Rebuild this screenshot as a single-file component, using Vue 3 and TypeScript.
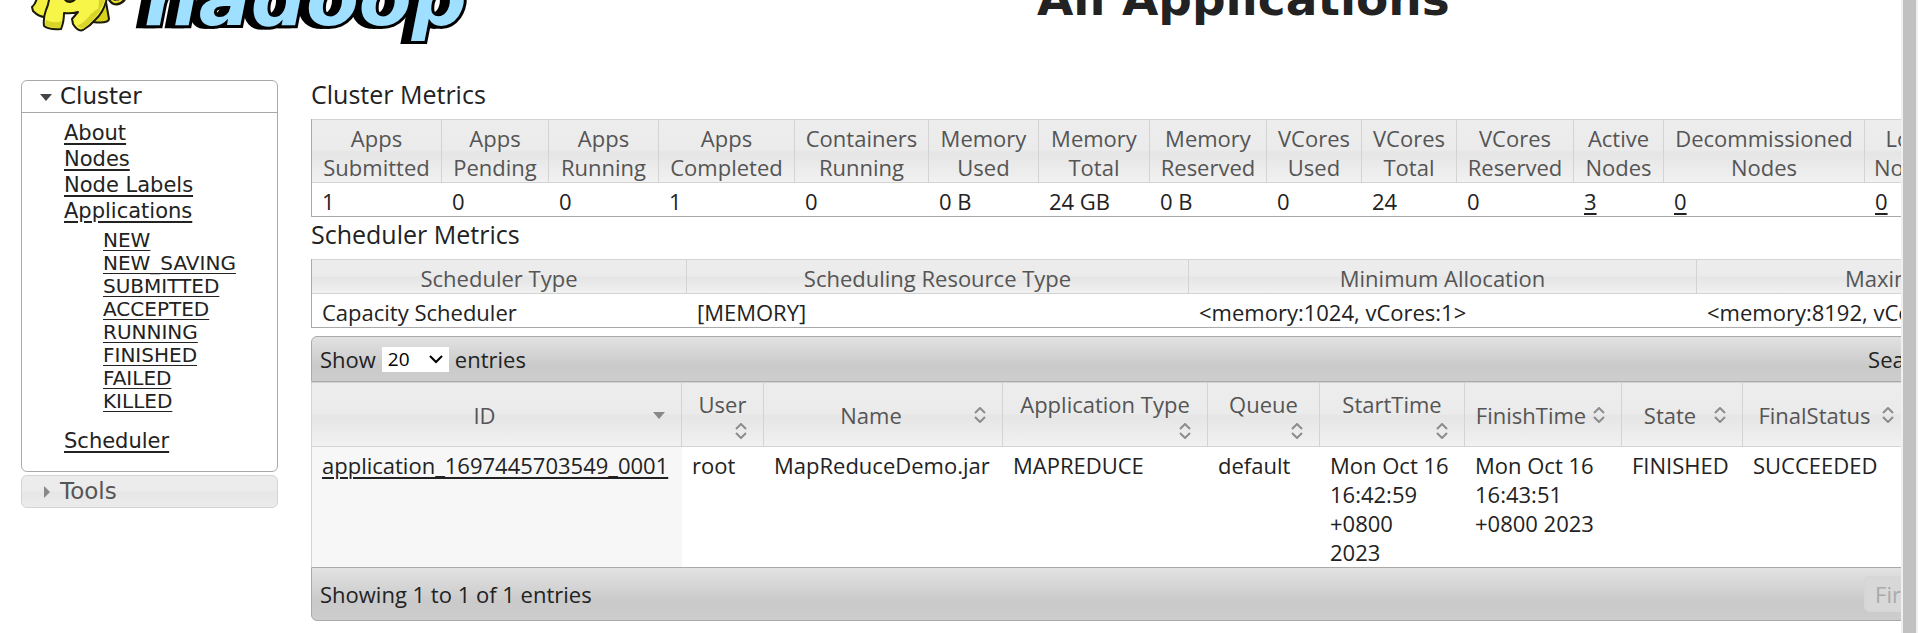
<script setup lang="ts">
import { ref } from 'vue'

interface Metric {
  lines: string[]
  value: string
  width: number
  link?: boolean
}

interface Column {
  label: string
  width: number
  sort: 'desc' | 'both'
  stacked?: boolean
}

const appStates = ['NEW', 'NEW_SAVING', 'SUBMITTED', 'ACCEPTED', 'RUNNING', 'FINISHED', 'FAILED', 'KILLED']

const metrics: Metric[] = [
  { lines: ['Apps', 'Submitted'], value: '1', width: 130 },
  { lines: ['Apps', 'Pending'], value: '0', width: 107 },
  { lines: ['Apps', 'Running'], value: '0', width: 110 },
  { lines: ['Apps', 'Completed'], value: '1', width: 136 },
  { lines: ['Containers', 'Running'], value: '0', width: 134 },
  { lines: ['Memory', 'Used'], value: '0 B', width: 110 },
  { lines: ['Memory', 'Total'], value: '24 GB', width: 111 },
  { lines: ['Memory', 'Reserved'], value: '0 B', width: 117 },
  { lines: ['VCores', 'Used'], value: '0', width: 95 },
  { lines: ['VCores', 'Total'], value: '24', width: 95 },
  { lines: ['VCores', 'Reserved'], value: '0', width: 117 },
  { lines: ['Active', 'Nodes'], value: '3', width: 90, link: true },
  { lines: ['Decommissioned', 'Nodes'], value: '0', width: 201, link: true },
  { lines: ['Lost', 'Nodes'], value: '0', width: 85, link: true },
  { lines: ['Unhealthy', 'Nodes'], value: '0', width: 127, link: true },
  { lines: ['Rebooted', 'Nodes'], value: '0', width: 127, link: true },
]

const scheduler = [
  { label: 'Scheduler Type', value: 'Capacity Scheduler', width: 375 },
  { label: 'Scheduling Resource Type', value: '[MEMORY]', width: 502 },
  { label: 'Minimum Allocation', value: '<memory:1024, vCores:1>', width: 508 },
  { label: 'Maximum Allocation', value: '<memory:8192, vCores:8>', width: 507 },
]

const columns: Column[] = [
  { label: 'ID', width: 370, sort: 'desc' },
  { label: 'User', width: 82, sort: 'both', stacked: true },
  { label: 'Name', width: 239, sort: 'both' },
  { label: 'Application Type', width: 205, sort: 'both', stacked: true },
  { label: 'Queue', width: 112, sort: 'both', stacked: true },
  { label: 'StartTime', width: 145, sort: 'both', stacked: true },
  { label: 'FinishTime', width: 157, sort: 'both' },
  { label: 'State', width: 121, sort: 'both' },
  { label: 'FinalStatus', width: 168, sort: 'both' },
  { label: 'Progress', width: 293, sort: 'both' },
]

const application = {
  id: 'application_1697445703549_0001',
  cells: [
    ['root'],
    ['MapReduceDemo.jar'],
    ['MAPREDUCE'],
    ['default'],
    ['Mon Oct 16', '16:42:59', '+0800', '2023'],
    ['Mon Oct 16', '16:43:51', '+0800 2023'],
    ['FINISHED'],
    ['SUCCEEDED'],
    [''],
  ],
}

const pageSize = ref('20')
const query = ref('')
</script>

<template>
  <div class="window">
    <div class="page">
      <header class="banner">
        <svg class="logo" viewBox="21 -70 460 116" role="img" aria-label="hadoop">
          <g stroke="#1c1b08" stroke-width="2" stroke-linejoin="round">
            <path fill="#d8d31c" d="M97 -10 L106 2 L109 19 Q108 24 93 22 L92 8 Z" />
            <path fill="none" stroke-width="5" d="M109 -4 Q111 3 117 3 Q123 2 125 -4" />
            <path fill="none" stroke="#e2dc2a" stroke-width="2" d="M110 -4 Q112 3 117 2 Q122 1 124 -4" />
            <path fill="#f3f040" d="M38 -12 Q38 2 32 7 L33 11 Q39 17 45 17 L49 9 L54 -12 Z" />
            <path fill="#f7f548" d="M50 -14 Q50 2 46 10 Q43 18 44 26 Q49 30 61 29 Q64 22 64 13 Q71 14 78 12 L72 19 L73 24 Q78 32 83 30 Q90 26 95 20 Q104 12 107 -2 L100 -14 Z" />
            <path fill="#4b4805" d="M64 -5 Q64 2 70 2 Q76 1 77 -5 Z" />
          </g>
          <path fill="#d9d42a" d="M46 20 Q54 24 62 21 L60 28 Q50 28 45 25 Z M77 26 Q84 23 91 14 L97 9 L101 10 Q93 21 83 29 Z M99 0 L105 0 Q103 6 98 12 Z" />
          <text class="wordmark" x="144" y="25">hadoop</text>
        </svg>
        <h1 class="title">All Applications</h1>
      </header>

      <div class="body">
        <nav class="sidebar">
          <section class="panel">
            <button type="button" class="panel-head">
              <svg width="12" height="12" viewBox="0 0 12 12"><path d="M0 3 H12 L6 10 Z" fill="#454545" /></svg>
              Cluster
            </button>
            <ul class="links">
              <li><a href="#about">About</a></li>
              <li><a href="#nodes">Nodes</a></li>
              <li><a href="#nodelabels">Node Labels</a></li>
              <li>
                <a href="#apps">Applications</a>
                <ul class="states">
                  <li v-for="state in appStates" :key="state">
                    <a :href="'#apps/' + state">{{ state }}</a>
                  </li>
                </ul>
              </li>
              <li><a href="#scheduler">Scheduler</a></li>
            </ul>
          </section>
          <button type="button" class="tools">
            <svg width="12" height="12" viewBox="0 0 12 12"><path d="M4 0 L10 6 L4 12 Z" fill="#888" /></svg>
            Tools
          </button>
        </nav>

        <main class="main">
          <div class="content">
            <h2 class="heading">Cluster Metrics</h2>
            <table class="grid">
              <colgroup>
                <col v-for="(m, i) in metrics" :key="i" :style="{ width: m.width + 'px' }" />
              </colgroup>
              <thead>
                <tr>
                  <th v-for="(m, i) in metrics" :key="i">{{ m.lines[0] }}<br />{{ m.lines[1] }}</th>
                </tr>
              </thead>
              <tbody>
                <tr>
                  <td v-for="(m, i) in metrics" :key="i">
                    <a v-if="m.link" href="#nodes">{{ m.value }}</a>
                    <template v-else>{{ m.value }}</template>
                  </td>
                </tr>
              </tbody>
            </table>

            <h2 class="heading">Scheduler Metrics</h2>
            <table class="grid">
              <colgroup>
                <col v-for="s in scheduler" :key="s.label" :style="{ width: s.width + 'px' }" />
              </colgroup>
              <thead>
                <tr>
                  <th v-for="s in scheduler" :key="s.label">{{ s.label }}</th>
                </tr>
              </thead>
              <tbody>
                <tr>
                  <td v-for="s in scheduler" :key="s.label">{{ s.value }}</td>
                </tr>
              </tbody>
            </table>

            <div class="bar bar-top">
              <label class="length">
                Show
                <span class="select-box">
                  <select v-model="pageSize">
                    <option>10</option>
                    <option>20</option>
                    <option>50</option>
                    <option>100</option>
                  </select>
                  <svg class="chevron" width="14" height="10" viewBox="0 0 14 10">
                    <path d="M1 2 L7 8 L13 2" fill="none" stroke="#000" stroke-width="2" />
                  </svg>
                </span>
                entries
              </label>
              <label class="search">Search: <input v-model="query" type="text" /></label>
            </div>

            <table class="grid apps">
              <colgroup>
                <col v-for="c in columns" :key="c.label" :style="{ width: c.width + 'px' }" />
              </colgroup>
              <thead>
                <tr>
                  <th v-for="c in columns" :key="c.label">
                    <button type="button" class="sort" :class="{ stacked: c.stacked }">
                      <span class="sort-label">{{ c.label }}</span>
                      <svg class="sort-icon" width="12" height="16" viewBox="0 0 12 16">
                        <path v-if="c.sort === 'desc'" d="M0 5 H12 L6 12 Z" fill="#888" />
                        <path v-else d="M1 6 L6 1 L11 6 M1 10 L6 15 L11 10" fill="none" stroke="#8c8c8c" stroke-width="2" />
                      </svg>
                    </button>
                  </th>
                </tr>
              </thead>
              <tbody>
                <tr>
                  <td class="sorted"><a href="#app">{{ application.id }}</a></td>
                  <td v-for="(cell, i) in application.cells" :key="i">
                    <div v-for="line in cell" :key="line">{{ line }}</div>
                  </td>
                </tr>
              </tbody>
            </table>

            <div class="bar bar-bottom">
              <span>Showing 1 to 1 of 1 entries</span>
              <div class="pager"><button type="button" class="first" disabled>First</button></div>
            </div>
          </div>
        </main>
      </div>
    </div>
    <div class="scrollbar"><div class="thumb"></div></div>
  </div>
</template>

<style>
body {
  background: #fff;
}
</style>

<style scoped>
.window {
  display: flex;
  min-height: 100vh;
  overflow: hidden;
  color: #222;
  font: 22px/29px "Open Sans", "Noto Sans", sans-serif;
}

.page {
  flex: 1;
  min-width: 0;
  overflow: hidden;
}

.scrollbar {
  flex: none;
  display: flex;
  width: 13px;
  padding: 0 2px;
  background: #f0f0f0;
}

.thumb {
  flex: 1;
  background: #c1c1c1;
}

button {
  margin: 0;
  border: 0;
  background: none;
  color: inherit;
  font: inherit;
  text-align: left;
}

a {
  color: #222;
  text-decoration: underline;
  text-decoration-thickness: 2px;
  text-underline-offset: 3px;
}

.banner {
  display: flex;
  height: 116px;
  margin-top: -70px;
  margin-bottom: 31px;
  padding-left: 21px;
}

.logo {
  flex: none;
  width: 460px;
  height: 116px;
}

.wordmark {
  fill: #9fdfff;
  stroke: #000;
  stroke-width: 6px;
  stroke-linejoin: miter;
  paint-order: stroke;
  font: italic bold 77px "DejaVu Sans", sans-serif;
  filter: drop-shadow(-7px 0 0 #000);
}

.title {
  flex: 1;
  margin: 41px 0 0 101px;
  padding-left: 455px;
  font: bold 47px/55px "DejaVu Sans", sans-serif;
  white-space: nowrap;
}

.body {
  display: flex;
  align-items: flex-start;
  gap: 33px;
  padding-left: 21px;
}

.sidebar {
  flex: none;
  box-sizing: border-box;
  width: 257px;
  padding-top: 3px;
  font: 21px/26px "DejaVu Sans", sans-serif;
}

.panel {
  border: 1px solid #aaa;
  border-radius: 6px;
}

.panel-head,
.tools {
  display: flex;
  align-items: center;
  gap: 8px;
  box-sizing: border-box;
  width: 100%;
  padding: 0 18px;
  font-size: 23px;
  line-height: 31px;
}

.panel-head {
  border-bottom: 1px solid #aaa;
}

.tools {
  margin-top: 3px;
  border: 1px solid #d3d3d3;
  border-radius: 6px;
  background: linear-gradient(#ededed, #ebebeb 49%, #e6e6e6 51%, #ececec);
  color: #555;
}

.links,
.states {
  margin: 0;
  padding: 0;
  list-style: none;
}

.links {
  padding: 7px 0 17px 42px;
}

.states {
  margin: 5px 0 15px 39px;
  font-size: 20px;
  line-height: 23px;
}

.states a {
  text-decoration-thickness: 1px;
}

.main {
  flex: 1;
  min-width: 0;
  overflow: hidden;
}

.content {
  width: 119%;
}

.heading {
  margin: 0;
  padding: 1px 0 9px;
  font-size: 25px;
  font-weight: 400;
  line-height: 32px;
}

.grid {
  width: 100%;
  border-spacing: 0;
  border-left: 1px solid #aaa;
  table-layout: fixed;
  white-space: nowrap;
}

.grid th {
  padding: 4px 0 0;
  border: solid #d3d3d3;
  border-width: 1px 1px 1px 0;
  background: linear-gradient(#ededed, #ebebeb 48%, #e5e5e5 52%, #f1f1f1);
  color: #555;
  font-weight: 400;
}

.grid td {
  padding: 4px 0 0 10px;
  border-bottom: 1px solid #aaa;
  vertical-align: top;
}

.bar {
  display: flex;
  align-items: center;
  justify-content: space-between;
  box-sizing: border-box;
  padding: 0 8px;
  border: 1px solid #aaa;
  background: linear-gradient(#e2e2e2, #cacaca 65%, #cdcdcd);
}

.bar-top {
  height: 46px;
  margin-top: 8px;
  border-radius: 6px 6px 0 0;
}

.bar-bottom {
  height: 54px;
  border-radius: 0 0 6px 6px;
}

.length {
  display: flex;
  align-items: center;
  gap: 6px;
}

.select-box {
  display: grid;
  align-items: center;
}

.select-box > * {
  grid-area: 1 / 1;
}

select {
  appearance: none;
  width: 67px;
  height: 25px;
  padding: 0 6px;
  border: 0;
  border-radius: 0;
  background: #fff;
  color: #000;
  font: 19px/25px "Open Sans", "Noto Sans", sans-serif;
}

.chevron {
  justify-self: end;
  margin-right: 6px;
  pointer-events: none;
}

.search,
.pager {
  display: flex;
  align-items: center;
  gap: 8px;
  width: 326px;
}

.pager {
  width: 330px;
}

.search input {
  flex: 1;
  min-width: 0;
  height: 26px;
  box-sizing: border-box;
  border: 1px solid #aaa;
  background: #fff;
  font: inherit;
}

.first {
  height: 36px;
  padding: 0 10px;
  border: 1px solid #d6d6d6;
  border-radius: 6px;
  background: #d8d8d8;
  color: #aaa;
}

.apps {
  border-left-color: #d3d3d3;
}

.apps th {
  height: 49px;
  padding: 7px 16px 7px 0;
}

.apps td {
  border-bottom: 0;
}

.apps .sorted {
  background: #f7f7f7;
}

.sort {
  display: flex;
  align-items: center;
  width: 100%;
  padding: 0;
}

.sort-label {
  flex: 1;
  padding: 2px 0 0 4px;
  text-align: center;
}

.sort.stacked {
  flex-direction: column;
  gap: 4px;
}

.stacked .sort-label {
  padding: 0 0 0 16px;
}

.sort-icon {
  flex: none;
}

.stacked .sort-icon {
  align-self: flex-end;
}
</style>
